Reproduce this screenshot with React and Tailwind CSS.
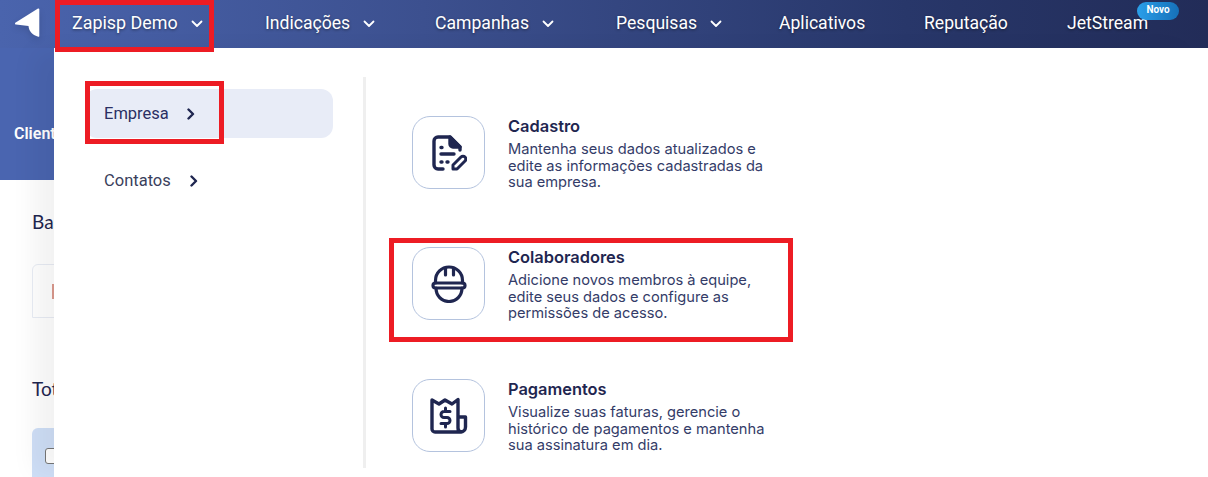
import React from 'react';

const navFont = "font-['Roboto','Liberation_Sans',sans-serif]";
const cardFont = "font-['Inter','Noto_Sans',sans-serif]";

const Chevron = ({ className = '' }) => (
  <svg viewBox="0 0 12 8" className={className} fill="none" stroke="currentColor" strokeWidth="1.8" strokeLinecap="round" strokeLinejoin="round">
    <path d="M1.5 1.5 6 6l4.5-4.5" />
  </svg>
);

const ChevronRight = () => (
  <svg viewBox="0 0 8 12" className="w-2 h-3 text-[#1f2650]" fill="none" stroke="currentColor" strokeWidth="2.4" strokeLinecap="round" strokeLinejoin="round">
    <path d="M1.5 1.5 6 6l-4.5 4.5" />
  </svg>
);

const Logo = () => (
  <svg viewBox="0 0 25 30" className="w-[25px] h-[30px] drop-shadow-md">
    <path d="M.3 14.700 23 .6c.6-.4 1.300 0 1.300.7V28c0 .7-.5 1-1 .8C18 27 14 24 13.500 18L1 16.600c-1-.1-1.200-1.300-.7-1.900Z" fill="#fff" />
  </svg>
);

const DocIcon = () => (
  <svg viewBox="0 0 36 38" className="w-9 h-[38px]" fill="none" stroke="#1f2650" strokeWidth="3.400" strokeLinecap="round" strokeLinejoin="round">
    <path d="M12 35H7a4 4 0 0 1-4-4V7a4 4 0 0 1 4-4h12l10 10v3" />
    <path d="M19 3v7a3 3 0 0 0 3 3h7Z" fill="#1f2650" />
    <path d="M10 13.500h1M10 20h13M10 28h1M16 28h1" />
    <path d="M22 35v-4l8-8a2.500 2.500 0 0 1 4 4l-8 8Z" strokeWidth="3" />
  </svg>
);

const HelmetIcon = () => (
  <svg viewBox="0 0 38 38" className="w-[38px] h-[38px]" fill="none" stroke="#1f2650" strokeWidth="3.200" strokeLinecap="round" strokeLinejoin="round">
    <path d="M5.500 18v-2.500a13.500 13.500 0 0 1 27 0V18" />
    <path d="M15.500 3v7M23.500 3v7" />
    <rect x="3" y="18" width="32" height="5" rx="2.500" />
    <path d="M6 23c0 7 5 13.500 13 13.500S32 30 32 23" />
  </svg>
);

const ReceiptIcon = () => (
  <svg viewBox="0 0 38 38" className="w-[38px] h-[38px]" fill="none" stroke="#1f2650" strokeWidth="3.400" strokeLinecap="round" strokeLinejoin="round">
    <path d="M28 20h7.500v10a5 5 0 0 1-5 5H5a3 3 0 0 1-3-3V3l7 4 6-4 7 4 6-4.500V31a4 4 0 0 0 3 4" />
    <path d="M20 14.500h-6a3 3 0 0 0 0 6h3a3 3 0 0 1 0 6h-6M15.500 11v3.500M15.500 26.500V30" strokeWidth="3" />
  </svg>
);

const navItems = [
  { label: 'Indicações', chevron: true, cls: 'w-[170px]' },
  { label: 'Campanhas', chevron: true, cls: 'w-[181px]' },
  { label: 'Pesquisas', chevron: true, cls: 'w-[163px]' },
  { label: 'Aplicativos', cls: 'w-[145px]' },
  { label: 'Reputação', cls: 'w-[143px]' },
];

const cards = [
  {
    title: 'Cadastro',
    icon: <DocIcon />,
    lines: ['Mantenha seus dados atualizados e', 'edite as informações cadastradas da', 'sua empresa.'],
  },
  {
    title: 'Colaboradores',
    icon: <HelmetIcon />,
    lines: ['Adicione novos membros à equipe,', 'edite seus dados e configure as', 'permissões de acesso.'],
  },
  {
    title: 'Pagamentos',
    icon: <ReceiptIcon />,
    lines: ['Visualize suas faturas, gerencie o', 'histórico de pagamentos e mantenha', 'sua assinatura em dia.'],
  },
];

const Card = ({ title, icon, lines, className = '' }) => (
  <div className={`flex gap-[23px] h-[73px] ${className}`}>
    <div className="w-[73px] h-[73px] shrink-0 flex items-center justify-center rounded-[18px] border border-[#b4c3de] bg-white">
      {icon}
    </div>
    <div className={cardFont}>
      <div className="text-[16.400px] leading-[20px] font-semibold text-[#1f2650]">{title}</div>
      <div className="mt-[5px] text-[14.650px] leading-[16.500px] text-[#343c68] whitespace-nowrap">
        {lines.map((l) => (
          <div key={l}>{l}</div>
        ))}
      </div>
    </div>
  </div>
);

export default function App() {
  return (
    <div className={`relative w-[1208px] h-[477px] overflow-hidden bg-white ${navFont}`}>
      {/* page behind the menu */}
      <header className="h-12 flex items-center bg-[linear-gradient(90deg,#4a64ad_0%,#3c508f_35%,#28376a_75%,#222c58_100%)]">
        <div className="w-[54px] pl-[15px] pb-[2px] shrink-0">
          <Logo />
        </div>
        <div className="w-[211px] pl-[18px] pb-[2px] flex items-center gap-[13px] text-[17.900px] text-white [text-shadow:0_1px_3px_rgba(0,0,0,.45)]">
          Zapisp Demo
          <Chevron className="w-3 h-2 mt-[3px]" />
        </div>
        {navItems.map((n) => (
          <div key={n.label} className={`${n.cls} pb-[2px] flex items-center gap-[13px] text-[17.600px] text-white [text-shadow:0_1px_3px_rgba(0,0,0,.45)]`}>
            {n.label}
            {n.chevron && <Chevron className="w-3 h-2 mt-[3px]" />}
          </div>
        ))}
        <div className="relative pb-[2px] text-[17.600px] text-white [text-shadow:0_1px_3px_rgba(0,0,0,.45)]">
          JetStream
          <span className="absolute -top-[8px] -right-[31px] w-[42px] h-[18px] rounded-full bg-[linear-gradient(90deg,#2a9fea,#1670b8)] text-[10px] leading-[16px] font-bold text-center [text-shadow:none]">
            Novo
          </span>
        </div>
      </header>
      <div className="h-[132px] pl-[14px] pt-[76px] bg-[#4a65b0] text-white text-[16px] font-semibold leading-5">
        Clientes
      </div>
      <main className="pl-8 pt-[30px] text-[#1f2650] font-['Lato',sans-serif]">
        <div className="text-[19px] leading-6">Bases</div>
        <div className="mt-[30px] h-[54px] w-[400px] rounded-tl-md border border-[#e8ecf4] flex items-center pl-[19px]">
          <span className="w-[2px] h-[15px] bg-[#dc9a8e]" />
        </div>
        <div className="mt-[59px] text-[19px] leading-6">Total</div>
        <div className="mt-[27px] h-[60px] w-[400px] rounded-t-md bg-[#cfdff7] pl-[13px] pt-[20px]">
          <span className="block w-4 h-4 rounded-[3px] border border-[#777] bg-white" />
        </div>
      </main>

      {/* dropdown, over the page */}
      <div className="absolute left-[54px] top-12 right-0 bottom-0 bg-white shadow-[-24px_0_24px_-4px_rgba(0,0,0,.05)] flex pl-[31px] pt-[29px]">
        <div className="w-[248px] shrink-0 pt-[12px] text-[16.500px] text-[#2a2f63]">
          <div className="h-[49px] w-[248px] pl-[19px] rounded-xl bg-[#e8ecf7] flex items-center">
            <span className="w-[83px] pt-[1px]">Empresa</span>
            <ChevronRight />
          </div>
          <div className="mt-[18px] h-[49px] pl-[19px] flex items-center text-[#3a3f5c]">
            <span className="w-[86px] pt-[1px]">Contatos</span>
            <ChevronRight />
          </div>
        </div>
        <div className="ml-[30px] w-[3px] h-[391px] bg-[#efefef]" />
        <div className="ml-[46px] pt-[39px] flex flex-col gap-[58px]">
          <Card {...cards[0]} />
          <Card {...cards[1]} />
          <Card {...cards[2]} className="mt-[1px]" />
        </div>
      </div>

      {/* red annotation boxes from the screenshot */}
      <div className="absolute left-[55px] top-0 w-[159px] h-[52px] border-[5px] border-[#ed1c24] pointer-events-none" />
      <div className="absolute left-[85px] top-[81px] w-[139px] h-[63px] border-[5px] border-[#ed1c24] pointer-events-none" />
      <div className="absolute left-[389px] top-[238px] w-[404px] h-[104px] border-[5px] border-[#ed1c24] pointer-events-none" />
    </div>
  );
}
